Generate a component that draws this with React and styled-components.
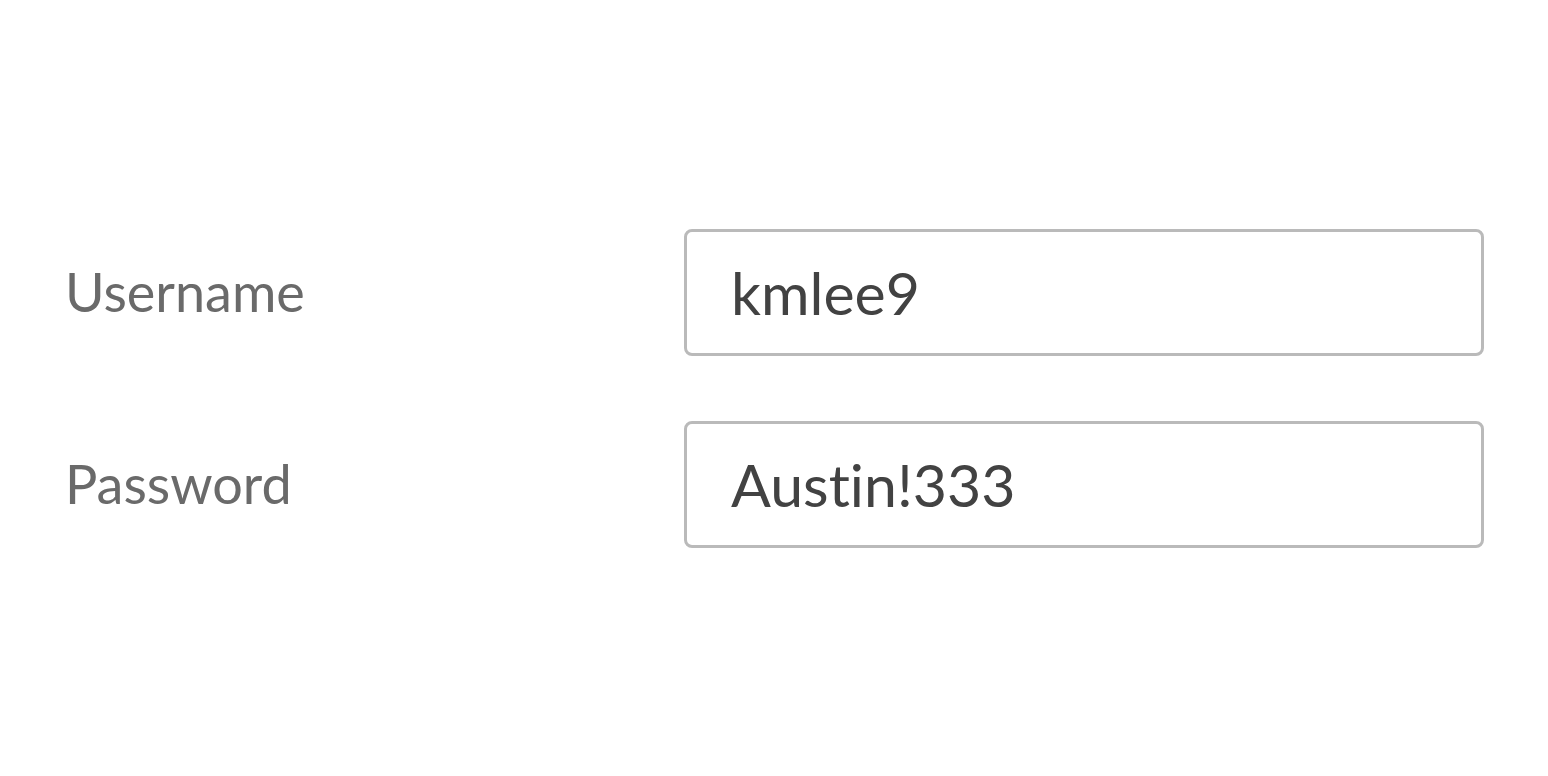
import React from "react";
import styled, { createGlobalStyle } from "styled-components";

const GlobalStyle = createGlobalStyle`
  html, body {
    margin: 0;
    padding: 0;
    background: #ffffff;
  }
  body {
    font-family: Lato, "Open Sans", "Liberation Sans", sans-serif;
  }
`;

const fields = [
  { id: "username", label: "Username", value: "kmlee9" },
  { id: "password", label: "Password", value: "Austin!333" },
];

const App = () => {
  return (
    <>
      <GlobalStyle />
      <Page>
        <Form onSubmit={e => e.preventDefault()}>
          {fields.map(field => (
            <Row key={field.id}>
              <Label htmlFor={field.id}>{field.label}</Label>
              <Input id={field.id} type="text" defaultValue={field.value} />
            </Row>
          ))}
        </Form>
      </Page>
    </>
  );
};
export default App;

const Page = styled.div`
  min-height: 100vh;
  display: flex;
  align-items: center;
  box-sizing: border-box;
  padding: 0 64px 0 65px;
`;

const Form = styled.form`
  width: 100%;
  display: flex;
  flex-direction: column;
  gap: 65px;
`;

const Row = styled.div`
  display: grid;
  grid-template-columns: 1fr 800px;
  align-items: center;
`;

const Label = styled.label`
  font-family: Lato, "Open Sans", sans-serif;
  font-size: 54px;
  color: #6a6a6a;
  line-height: 1;
  font-variant-ligatures: none;
`;

const Input = styled.input`
  box-sizing: border-box;
  width: 100%;
  height: 127px;
  margin: 0;
  padding: 0 20px 0 44px;
  border: 3px solid #bababa;
  border-radius: 8px;
  background: #ffffff;
  font-family: Lato, "Open Sans", sans-serif;
  font-size: 59px;
  color: #424242;
  outline: none;
  font-variant-ligatures: none;
`;
